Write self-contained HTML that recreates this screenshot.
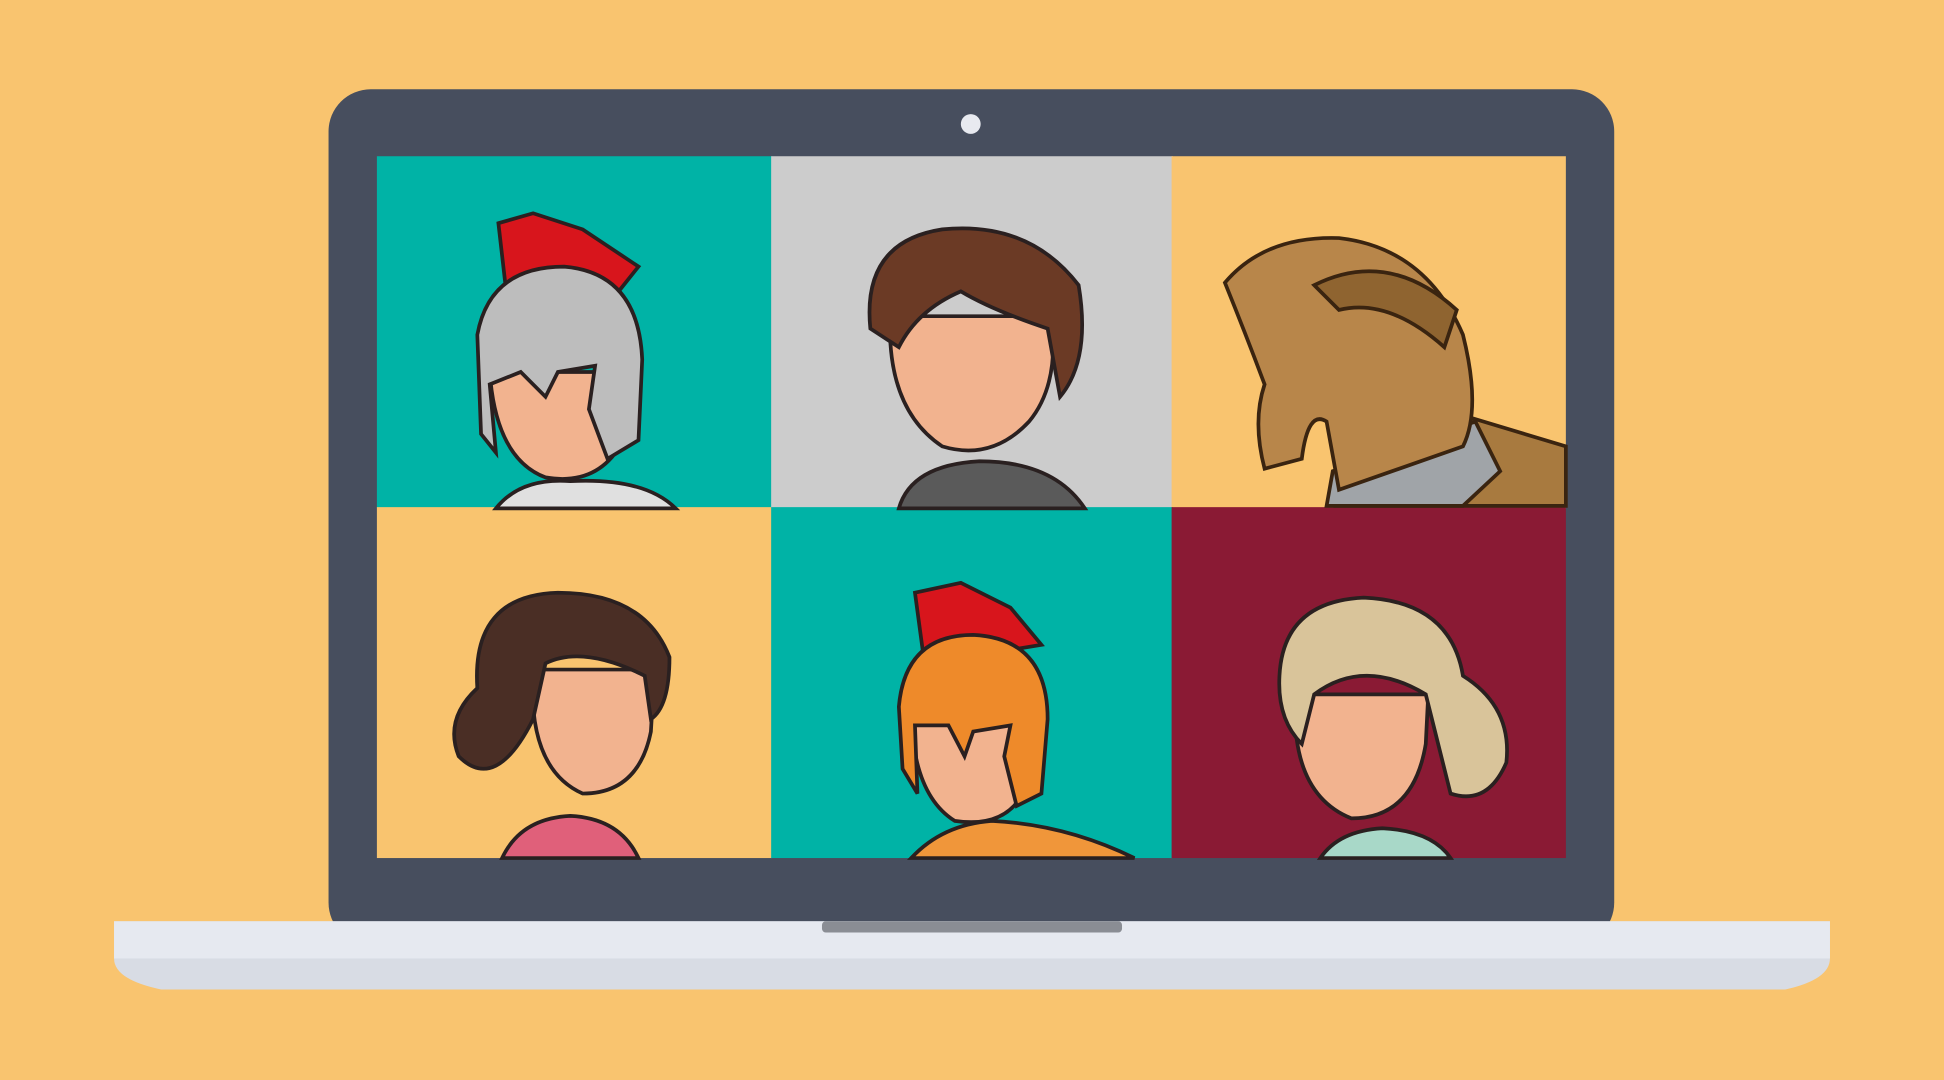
<!DOCTYPE html>
<html><head><meta charset="utf-8"><style>
html,body{margin:0;padding:0;background:#F9C46F;overflow:hidden}
svg{display:block}
</style></head><body>
<svg width="1944" height="1080" viewBox="0 0 1568 871" preserveAspectRatio="none" xmlns="http://www.w3.org/2000/svg">
<rect width="1568" height="871" fill="#F9C46F"/>
<!-- laptop body -->
<rect x="265" y="72" width="1037" height="690" rx="34" fill="#474E5E"/>
<circle cx="783" cy="100" r="8" fill="#E8EAF0"/>
<!-- screen cells -->
<rect x="304" y="126" width="319" height="284" fill="#00B3A6"/>
<rect x="622" y="126" width="324" height="284" fill="#CCCCCC"/>
<rect x="945" y="126" width="318" height="284" fill="#F9C46F"/>
<rect x="304" y="409" width="319" height="283" fill="#F9C46F"/>
<rect x="622" y="409" width="324" height="283" fill="#00B3A6"/>
<rect x="945" y="409" width="318" height="283" fill="#8A1A34"/>
<!-- base -->
<path d="M92 743 H1476 V773 Q1476 790 1440 798 H130 Q92 790 92 773 Z" fill="#D8DCE4"/>
<rect x="92" y="743" width="1384" height="30" fill="#E6E9F0"/>
<rect x="663" y="743" width="242" height="9" rx="3" fill="#8A8D94"/>

<!-- cell1: silver helmet warrior -->
<g stroke="#2a2020" stroke-width="3">
<path d="M400 410 Q420 385 460 388 Q520 385 545 410 Z" fill="#E0E0E0"/>
<path d="M395 300 Q400 370 440 385 Q480 392 500 360 L505 300 Z" fill="#F2B38F"/>
<path d="M402 180 L430 172 L470 185 L515 215 L495 240 L430 250 L410 250 Z" fill="#D8151C"/>
<path d="M385 270 Q395 215 455 215 Q515 220 518 290 L515 355 L490 370 L475 330 L480 295 L450 300 L440 320 L420 300 L395 310 L400 365 L388 350 Z" fill="#BDBDBD"/>
</g>
<!-- cell2: curly hair man -->
<g stroke="#2a2020" stroke-width="3">
<path d="M725 410 Q735 375 790 372 Q850 372 875 410 Z" fill="#5A5A5A"/>
<path d="M718 255 Q715 330 760 360 Q800 372 830 340 Q855 310 848 255 Z" fill="#F2B38F"/>
<path d="M702 265 Q695 195 760 185 Q830 178 870 230 Q880 290 855 320 L845 265 Q800 250 775 235 Q740 250 725 280 Z" fill="#6B3A25"/>
</g>
<!-- cell3: trojan horse -->
<g stroke="#3a2410" stroke-width="3">
<path d="M1080 408 L1180 335 L1263 360 L1263 408 Z" fill="#A87A3F"/>
<path d="M1070 408 L1075 380 L1190 340 L1210 380 L1180 408 Z" fill="#A0A4A8"/>
<path d="M988 228 Q1020 190 1080 192 Q1150 200 1180 270 Q1195 330 1180 360 L1080 395 L1070 340 Q1055 330 1050 370 L1020 378 Q1010 340 1020 310 Q1005 270 988 228 Z" fill="#B8864A"/>
<path d="M1060 230 Q1120 200 1175 250 L1165 280 Q1120 240 1080 250 Z" fill="#8F6430"/>
</g>
<!-- cell4: dark-haired woman -->
<g stroke="#2a2020" stroke-width="3">
<path d="M405 692 Q420 660 460 658 Q500 660 515 692 Z" fill="#E0607A"/>
<path d="M430 540 Q425 620 470 640 Q515 640 525 590 L528 540 Z" fill="#F2B38F"/>
<path d="M385 555 Q380 480 450 478 Q520 478 540 530 Q540 570 525 580 L520 545 Q470 520 440 535 L430 580 Q400 640 370 610 Q358 580 385 555 Z" fill="#4A2E25"/>
</g>
<!-- cell5: orange helmet -->
<g stroke="#2a2020" stroke-width="3">
<path d="M735 692 Q760 665 800 662 Q860 665 915 692 Z" fill="#F0963A"/>
<path d="M735 570 Q735 640 770 662 Q810 668 825 640 L830 570 Z" fill="#F2B38F"/>
<path d="M738 478 L775 470 L815 490 L840 520 L780 530 L745 530 Z" fill="#D8151C"/>
<path d="M725 570 Q730 512 785 512 Q845 515 845 580 L840 640 L820 650 L810 610 L815 585 L785 590 L778 610 L765 585 L738 585 L740 640 L728 620 Z" fill="#EE8A2A"/>
</g>
<!-- cell6: blonde woman -->
<g stroke="#2a2020" stroke-width="3">
<path d="M1065 692 Q1080 670 1115 668 Q1155 670 1170 692 Z" fill="#A8D8C8"/>
<path d="M1045 560 Q1040 640 1090 660 Q1140 660 1150 600 L1152 560 Z" fill="#F2B38F"/>
<path d="M1032 545 Q1035 485 1100 482 Q1170 485 1180 545 Q1220 570 1215 615 Q1200 650 1170 640 L1150 560 Q1100 530 1060 560 L1050 600 Q1030 580 1032 545 Z" fill="#D9C49A"/>
</g>
</svg>
</body></html>
